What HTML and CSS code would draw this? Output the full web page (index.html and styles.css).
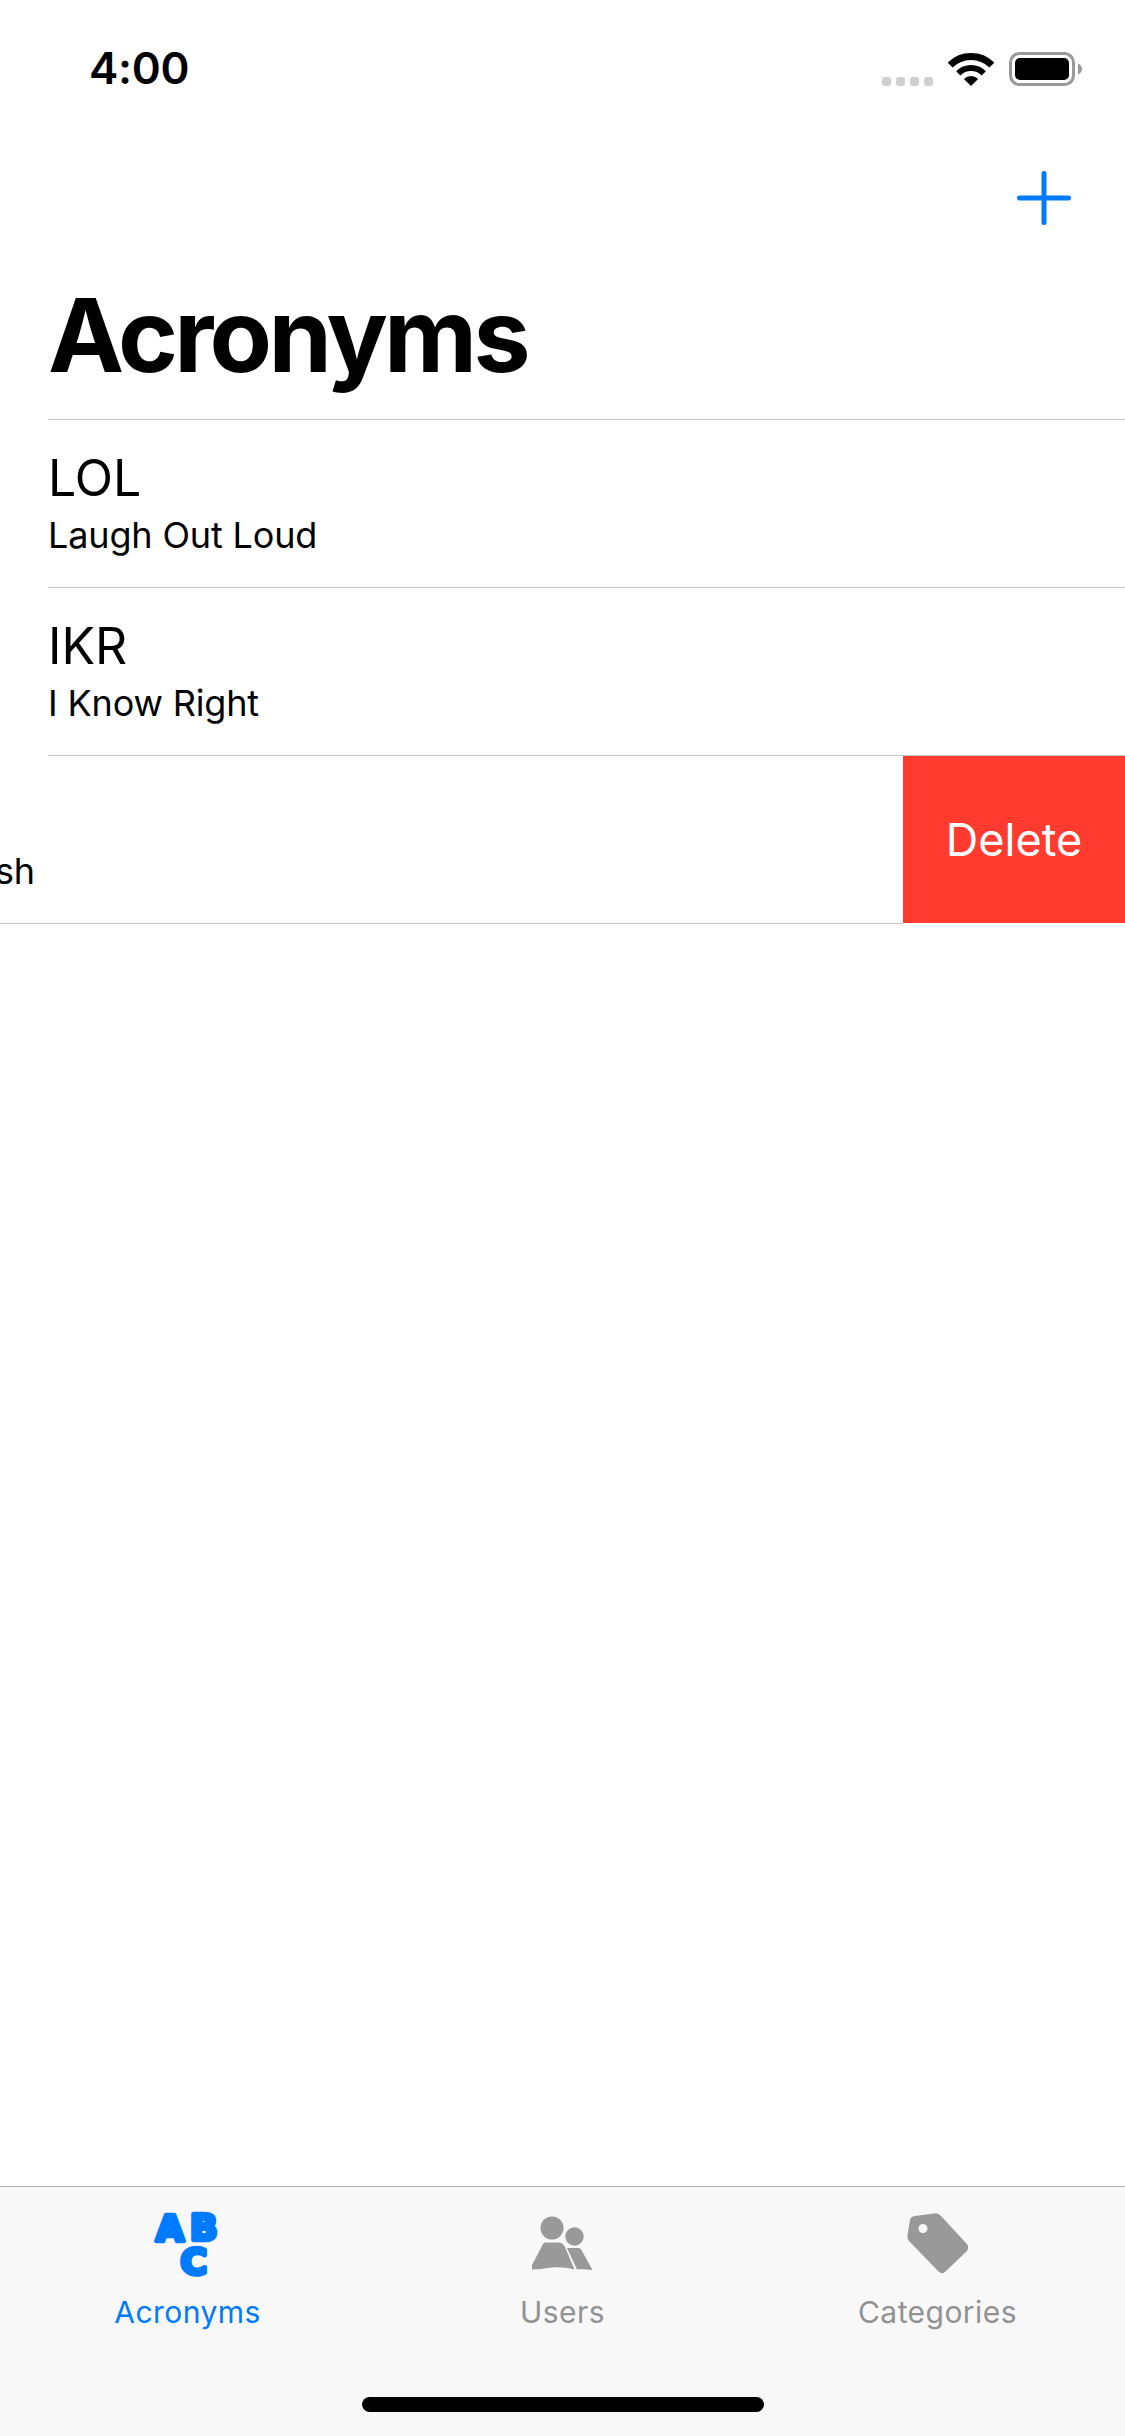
FILE: index.html
```html
<!DOCTYPE html>
<html lang="en">
<head>
<meta charset="utf-8">
<title>Acronyms</title>
<link rel="stylesheet" href="styles.css">
</head>
<body>
<div class="screen">
  <header class="status-bar">
    <span class="time">4:00</span>
    <div class="status-icons">
      <div class="signal"><i></i><i></i><i></i><i></i></div>
      <svg class="wifi" width="46" height="33" viewBox="0 0 46 33">
        <path d="M2.14 12.14A29.5 29.5 0 0 1 43.86 12.14" fill="none" stroke="#000" stroke-width="7"/>
        <path d="M10.27 20.27A18 18 0 0 1 35.73 20.27" fill="none" stroke="#000" stroke-width="6"/>
        <path d="M23 33L15.93 25.93A10 10 0 0 1 30.07 25.93Z" fill="#000"/>
      </svg>
      <svg class="battery" width="73" height="34" viewBox="0 0 73 34">
        <rect x="1.5" y="1.5" width="63" height="31" rx="9" fill="none" stroke="#999" stroke-width="3"/>
        <rect x="6" y="6" width="54" height="22" rx="5" fill="#000"/>
        <path d="M69 11.5C71.5 12.5 73 14.5 73 17S71.5 21.5 69 22.5Z" fill="#999"/>
      </svg>
    </div>
  </header>

  <nav class="nav-bar">
    <svg class="add" width="54" height="54" viewBox="0 0 54 54">
      <path d="M27 2.5V51.5M2.5 27H51.5" fill="none" stroke="#007aff" stroke-width="5" stroke-linecap="round"/>
    </svg>
  </nav>

  <h1 class="large-title">Acronyms</h1>

  <ul class="list">
    <li class="row">
      <div class="row-title">LOL</div>
      <div class="row-sub">Laugh Out Loud</div>
    </li>
    <li class="row row-last">
      <div class="row-title">IKR</div>
      <div class="row-sub">I Know Right</div>
    </li>
    <li class="row-swiped">
      <div class="swiped-content">
        <div class="row-sub swiped-sub">sh</div>
      </div>
      <div class="delete">Delete</div>
    </li>
  </ul>

  <footer class="tab-bar">
    <div class="tabs">
      <div class="tab tab-active">
        <svg class="tab-icon" width="84" height="80" viewBox="-7 0 84 80">
          <text class="abc" font-size="36"><tspan x="3" y="31.5">A</tspan><tspan x="37" y="31">B</tspan><tspan x="27.5" y="65">C</tspan></text>
        </svg>
        <span class="tab-label">Acronyms</span>
      </div>
      <div class="tab">
        <svg class="tab-icon" width="62" height="80" viewBox="1.500 -8 62 80">
          <ellipse cx="21.5" cy="11" rx="11.5" ry="11.5" fill="#999"/>
          <circle cx="44" cy="19.5" r="9.2" fill="#999"/>
          <path d="M15 25.500H28C31 25.500 33 27 34.500 30L44 52.500C36 50.500 28 50 22 50.500C14 51.500 6 52.500 1.500 52.500C0 52.500 0 51 .5 50L11 30C12 27 13 25.500 15 25.500Z" fill="#999"/>
          <path d="M36.500 31H48C49.500 31 50.500 32 51.500 34L62 53C56 52.500 52 52 46.500 52.500L36.500 31Z" fill="#999"/>
        </svg>
        <span class="tab-label">Users</span>
      </div>
      <div class="tab">
        <svg class="tab-icon" width="62" height="80" viewBox="0 -4 62 80">
          <path fill-rule="evenodd" d="M8 3L27 .5C30 0 32 1 34 3L59 30C62 33 62 36 59 39L39 58C36 61 34 61 31 58L3 29C1 27 0 25 .5 22L3 7C3.500 4.500 5 3.300 8 3ZM16 11A4.500 4.500 0 1 0 16 20A4.500 4.500 0 1 0 16 11Z" fill="#999"/>
        </svg>
        <span class="tab-label">Categories</span>
      </div>
    </div>
    <div class="home-indicator"></div>
  </footer>
</div>
</body>
</html>
```

FILE: styles.css
```css
* { box-sizing: border-box; }

html, body {
  margin: 0;
  padding: 0;
  background: #fff;
}

.screen {
  width: 1125px;
  height: 2436px;
  display: flex;
  flex-direction: column;
  overflow: hidden;
  font-family: Inter, "Liberation Sans", sans-serif;
  color: #000;
  background: #fff;
}

/* status bar */
.status-bar {
  height: 132px;
  padding: 50px 43px 0 89px;
  display: flex;
  justify-content: space-between;
  align-items: flex-start;
  flex: none;
}

.time {
  font-size: 44px;
  line-height: 36px;
  font-weight: 600;
  letter-spacing: -.3px;
}

.status-icons {
  display: flex;
  align-items: flex-end;
  padding-top: 2px;
}

.signal {
  display: flex;
  gap: 5px;
  margin-right: 15px;
}

.signal i {
  display: block;
  width: 9px;
  height: 9px;
  border-radius: 3px;
  background: #cfcfcf;
}

.wifi { margin-right: 15px; display: block; }
.battery { display: block; }

/* nav bar */
.nav-bar {
  height: 132px;
  flex: none;
  display: flex;
  justify-content: flex-end;
  align-items: flex-start;
  padding: 39px 54px 0 0;
}

.add { display: block; }

.large-title {
  margin: 0;
  height: 155px;
  flex: none;
  padding-left: 48px;
  font-size: 102px;
  line-height: 142px;
  font-weight: 700;
  letter-spacing: -3.75px;
}

/* list */
.list {
  list-style: none;
  margin: 0;
  padding: 0;
  flex: none;
}

.row {
  height: 168px;
  margin-left: 48px;
  padding-top: 23px;
  border-top: 1px solid #c8c7cc;
}

.row-last {
  height: 169px;
  border-bottom: 1px solid #c8c7cc;
}

.row-title {
  font-size: 50px;
  line-height: 70px;
}

.row-sub {
  font-size: 36px;
  line-height: 44px;
  letter-spacing: -.15px;
}

.row-swiped {
  display: flex;
  align-items: flex-start;
}

.swiped-content {
  flex: 1;
  height: 168px;
  padding-top: 93px;
  border-bottom: 1px solid #c8c7cc;
}

.swiped-sub { margin-left: -5px; }

.delete {
  width: 222px;
  height: 167px;
  background: #ff3b30;
  color: #fff;
  font-size: 45px;
  display: flex;
  align-items: center;
  justify-content: center;
}

/* tab bar */
.tab-bar {
  margin-top: auto;
  height: 250px;
  flex: none;
  background: #f8f8f8;
  border-top: 1px solid #b2b2b2;
  display: flex;
  flex-direction: column;
}

.tabs {
  display: grid;
  grid-template-columns: repeat(3, 1fr);
  padding-top: 22px;
}

.tab {
  display: flex;
  flex-direction: column;
  align-items: center;
  color: #929292;
}

.tab-active { color: #007aff; }

.tab-icon { display: block; }

.tab-label {
  margin-top: 5px;
  font-size: 30px;
  line-height: 36px;
  letter-spacing: .45px;
}

.abc {
  font-family: "DejaVu Sans", sans-serif;
  font-weight: 700;
  fill: #007aff;
  stroke: #007aff;
  stroke-width: 4.5px;
  stroke-linejoin: round;
}

.home-indicator {
  width: 402px;
  height: 15px;
  margin: 67px auto 0;
  border-radius: 8px;
  background: #000;
}
```
